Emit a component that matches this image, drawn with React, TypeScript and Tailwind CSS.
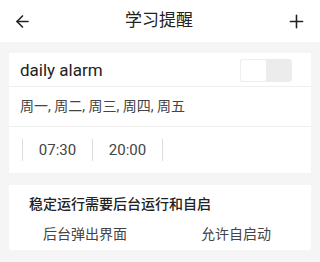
import { ArrowLeft, Plus } from "lucide-react";

export default function App() {
  return (
    <div className="h-[262px] w-[320px] overflow-hidden bg-[#f5f5f5] font-['Roboto','Noto_Sans_CJK_SC',sans-serif] text-[#222]">
      <header className="flex h-[42px] items-center justify-between bg-white px-[13px]">
        <ArrowLeft className="h-[19px] w-[19px]" strokeWidth={2} />
        <h1 className="text-[17px]">学习提醒</h1>
        <Plus className="h-[21px] w-[21px]" strokeWidth={1.8} />
      </header>

      <section className="mx-[9px] mt-[11px] bg-white">
        <div className="flex h-[34px] items-center justify-between border-b border-[#f0f0f0] pl-[11px] pr-[19px] pt-[2px]">
          <span className="text-[17px]">daily alarm</span>
          <div className="flex h-[23px] w-[52px] rounded-[3px] bg-[#ececec]">
            <div className="h-[23px] w-[27px] rounded-[3px] border border-[#eeeeee] bg-white" />
          </div>
        </div>
        <div className="flex h-[40px] items-center border-b border-[#f0f0f0] pl-[11px] text-[14px] text-[#444]">
          周一, 周二, 周三, 周四, 周五
        </div>
        <div className="flex h-[46px] items-center pl-[13px] text-[15px] text-[#444]">
          <span className="h-[22px] w-px bg-[#ddd]" />
          <span className="w-[69px] text-center">07:30</span>
          <span className="h-[22px] w-px bg-[#ddd]" />
          <span className="w-[69px] text-center">20:00</span>
          <span className="h-[22px] w-px bg-[#ddd]" />
        </div>
      </section>

      <section className="mx-[9px] mt-[12px] h-[65px] bg-white pt-[9px]">
        <div className="pl-[20px] text-[14px] font-medium text-[#222]">稳定运行需要后台运行和自启</div>
        <div className="mt-[9px] grid grid-cols-2 text-[14px] text-[#444]">
          <span className="pl-[34px]">后台弹出界面</span>
          <span className="pl-[41px]">允许自启动</span>
        </div>
      </section>
    </div>
  );
}
